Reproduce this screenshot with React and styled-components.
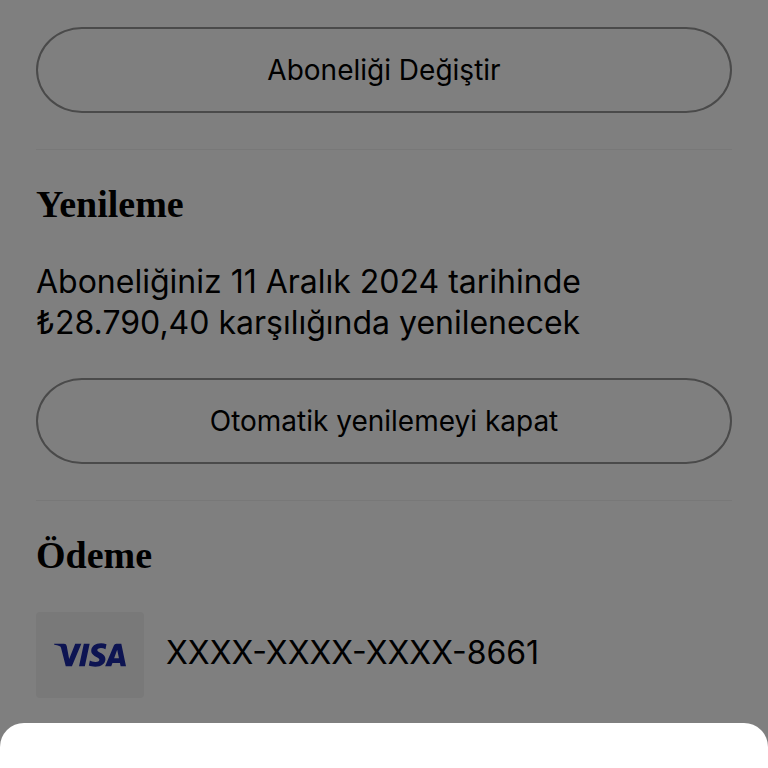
import React from "react"
import styled, { createGlobalStyle } from "styled-components"
import { SiVisa } from "react-icons/si"

const GlobalStyle = createGlobalStyle`
    * {
        box-sizing: border-box;
    }
    body {
        margin: 0;
        background-color: white;
        color: black;
        font-family: Inter, "Liberation Sans", sans-serif;
    }
`

const Page = styled.main`
    display: flex;
    flex-direction: column;
    min-height: 100vh;
    padding: 27px 36px 70px;
`

const Section = styled.section`
    display: flex;
    flex-direction: column;
    padding-bottom: 36px;
    & + & {
        border-top: 1px solid #f0f0f0;
        padding-top: 32px;
    }
`

const Title = styled.h2`
    margin: 0 0 35px;
    font-family: "Liberation Serif", serif;
    font-size: 38px;
    font-weight: bold;
    line-height: 44px;
`

const Info = styled.p`
    margin: 0 0 35px;
    font-size: 32px;
    line-height: 41px;
`

const PillButton = styled.button`
    height: 86px;
    border: 2px solid #949494;
    border-radius: 46px / 43px;
    background-color: transparent;
    color: inherit;
    font-family: inherit;
    font-size: 28px;
    cursor: pointer;
`

const Card = styled.div`
    display: flex;
    align-items: center;
    gap: 22px;
`

const CardBrand = styled.div`
    display: flex;
    align-items: center;
    justify-content: center;
    width: 108px;
    height: 86px;
    border-radius: 4px;
    background-color: #f2f2f2;
    color: #1a28a4;
`

const CardNumber = styled.span`
    padding-bottom: 6px;
    font-size: 32px;
    line-height: 41px;
`

const Backdrop = styled.div`
    position: fixed;
    inset: 0;
    display: flex;
    align-items: flex-end;
    background-color: rgba(0,0,0,.5);
`

const Sheet = styled.div`
    flex: 1;
    min-height: 45px;
    border-radius: 24px 24px 0 0;
    background-color: white;
`

const App = () => (
    <>
        <GlobalStyle />
        <Page lang="tr">
            <Section>
                <PillButton type="button">Aboneliği Değiştir</PillButton>
            </Section>
            <Section>
                <Title>Yenileme</Title>
                <Info>
                    Aboneliğiniz 11 Aralık 2024 tarihinde<br />
                    ₺28.790,40 karşılığında yenilenecek
                </Info>
                <PillButton type="button">Otomatik yenilemeyi kapat</PillButton>
            </Section>
            <Section>
                <Title>Ödeme</Title>
                <Card>
                    <CardBrand>
                        <SiVisa size={72} aria-label="Visa" />
                    </CardBrand>
                    <CardNumber>XXXX-XXXX-XXXX-8661</CardNumber>
                </Card>
            </Section>
        </Page>
        <Backdrop>
            <Sheet role="dialog" aria-modal="true" />
        </Backdrop>
    </>
)

export default App
